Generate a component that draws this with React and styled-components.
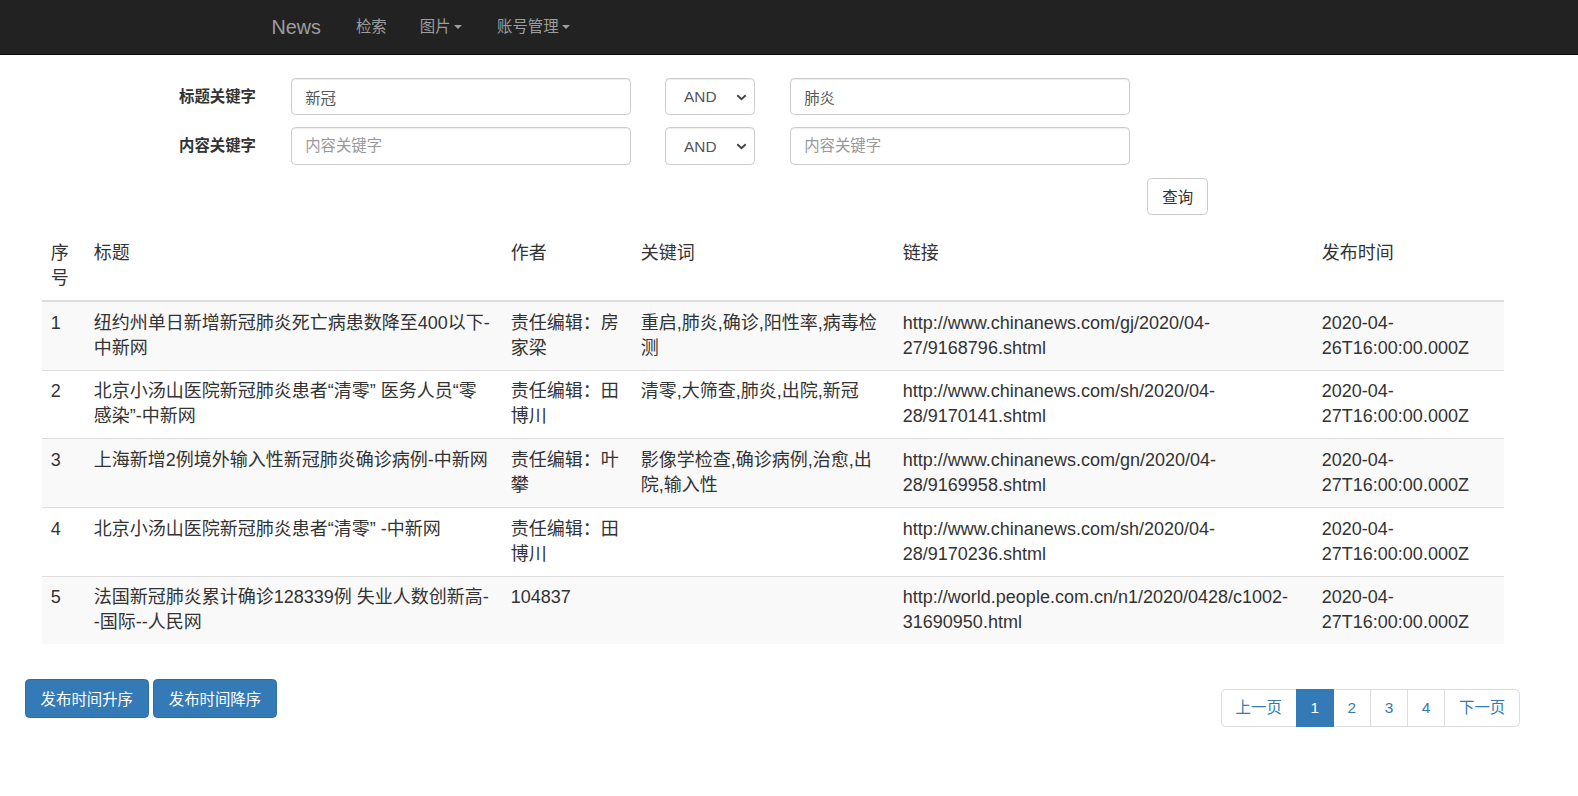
import React from "react";
import styled, { createGlobalStyle } from "styled-components";

const GlobalStyle = createGlobalStyle`
  html, body { margin: 0; padding: 0; background: #fff; }
  body {
    font-family: "Liberation Sans", "Noto Sans CJK SC", sans-serif;
    font-size: 15.4px;
    line-height: 1.42857;
    color: #333;
  }
  *, *::before, *::after { box-sizing: border-box; }
`;

const Navbar = styled.nav`
  background: #222;
  border-bottom: 1px solid #080808;
  height: 55px;
  display: flex;
  align-items: stretch;
  padding-left: 255px;
`;

const Brand = styled.a`
  padding: 0 18.5px 0 16.5px;
  font-size: 19.8px;
  line-height: 54px;
  color: #9d9d9d;
  text-decoration: none;
`;

const NavLink = styled.a`
  padding: 0 16.5px;
  font-size: 15.4px;
  line-height: 54px;
  color: #9d9d9d;
  text-decoration: none;
  display: flex;
  align-items: center;
`;

const Caret = styled.span`
  display: inline-block;
  width: 0;
  height: 0;
  margin-left: 3px;
  margin-right: 2.5px;
  border-top: 4.6px solid #9d9d9d;
  border-left: 4.6px solid transparent;
  border-right: 4.6px solid transparent;
`;

const SearchForm = styled.form`
  width: 1208px;
  padding: 23px 0 0 179px;
  display: flex;
  flex-direction: column;
  gap: 12px;
`;

const FormRow = styled.div`
  display: flex;
  align-items: center;
`;

const FieldLabel = styled.label`
  width: 112px;
  font-weight: bold;
  font-size: 15.4px;
  color: #333;
`;

const KeywordInput = styled.input`
  width: 340px;
  height: 37.4px;
  margin-left: ${(p) => p.$offset || 0}px;
  padding: 6.6px 13.2px;
  font-family: inherit;
  font-size: 15.4px;
  color: #555;
  background: #fff;
  border: 1px solid #ccc;
  border-radius: 4.4px;
  box-shadow: inset 0 1px 1px rgba(0, 0, 0, 0.075);
  outline: none;
  &::placeholder { color: #999; }
`;

const SelectWrap = styled.div`
  position: relative;
  width: 90px;
  height: 37.4px;
  margin-left: 34px;
`;

const Select = styled.select`
  appearance: none;
  width: 100%;
  height: 100%;
  padding: 0 0 0 18px;
  font-family: inherit;
  font-size: 15.4px;
  color: #555;
  background: #fff;
  border: 1px solid #ccc;
  border-radius: 4.4px;
  box-shadow: inset 0 1px 1px rgba(0, 0, 0, 0.075);
  outline: none;
`;

const Chevron = styled.svg`
  position: absolute;
  right: 8px;
  top: 16px;
  pointer-events: none;
`;

const ButtonRow = styled.div`
  display: flex;
  justify-content: flex-end;
  padding-top: 1px;
`;

const DefaultButton = styled.button`
  height: 37.4px;
  padding: 6.6px 13.9px;
  font-family: inherit;
  font-size: 15.4px;
  color: #333;
  background: #fff;
  border: 1px solid #ccc;
  border-radius: 4.4px;
`;

const DataTable = styled.table`
  margin: 17px 0 0 42px;
  width: 1462px;
  table-layout: fixed;
  border-collapse: collapse;
  font-size: 18px;
  line-height: 25.05px;
  color: #333;
`;

const Th = styled.th`
  text-align: left;
  font-weight: normal;
  vertical-align: top;
  padding: 8.8px;
  border-bottom: 2px solid #ddd;
`;

const Tr = styled.tr`
  &:nth-of-type(odd) { background: #f9f9f9; }
`;

const Td = styled.td`
  vertical-align: top;
  padding: 8.8px;
  border-top: 1px solid #ddd;
`;

const Footer = styled.div`
  width: 1520px;
  margin-top: 35px;
  padding-left: 25px;
  display: flex;
  justify-content: space-between;
  align-items: flex-start;
`;

const SortGroup = styled.div`
  display: flex;
  gap: 4.6px;
`;

const PrimaryButton = styled.button`
  height: 38.4px;
  padding: 7px 14.6px;
  font-family: inherit;
  font-size: 15.4px;
  color: #fff;
  background: #337ab7;
  border: 1px solid #2e6da4;
  border-radius: 4.4px;
`;

const Pagination = styled.ul`
  display: flex;
  list-style: none;
  margin: 10px 0 0 0;
  padding: 0;
`;

const PageItem = styled.li`
  height: 37.6px;
  padding: 7px 13.8px;
  font-size: 15.4px;
  line-height: 22px;
  margin-left: -1px;
  color: ${(p) => (p.$active ? "#fff" : "#337ab7")};
  background: ${(p) => (p.$active ? "#337ab7" : "#fff")};
  border: 1px solid ${(p) => (p.$active ? "#337ab7" : "#ddd")};
  position: ${(p) => (p.$active ? "relative" : "static")};
  border-radius: ${(p) =>
    p.$first ? "4.4px 0 0 4.4px" : p.$last ? "0 4.4px 4.4px 0" : "0"};
  &:first-child { margin-left: 0; }
`;

const columns = [
  { key: "no", title: "序号", width: 43 },
  { key: "title", title: "标题", width: 417 },
  { key: "author", title: "作者", width: 130 },
  { key: "kw", title: "关键词", width: 262 },
  { key: "link", title: "链接", width: 419 },
  { key: "time", title: "发布时间", width: 191 },
];

const rows = [
  {
    no: "1",
    title: "纽约州单日新增新冠肺炎死亡病患数降至400以下-中新网",
    author: "责任编辑：房家梁",
    kw: "重启,肺炎,确诊,阳性率,病毒检测",
    link: "http://www.chinanews.com/gj/2020/04-27/9168796.shtml",
    time: "2020-04-26T16:00:00.000Z",
  },
  {
    no: "2",
    title: "北京小汤山医院新冠肺炎患者“清零” 医务人员“零感染”-中新网",
    author: "责任编辑：田博川",
    kw: "清零,大筛查,肺炎,出院,新冠",
    link: "http://www.chinanews.com/sh/2020/04-28/9170141.shtml",
    time: "2020-04-27T16:00:00.000Z",
  },
  {
    no: "3",
    title: "上海新增2例境外输入性新冠肺炎确诊病例-中新网",
    author: "责任编辑：叶攀",
    kw: "影像学检查,确诊病例,治愈,出院,输入性",
    link: "http://www.chinanews.com/gn/2020/04-28/9169958.shtml",
    time: "2020-04-27T16:00:00.000Z",
  },
  {
    no: "4",
    title: "北京小汤山医院新冠肺炎患者“清零” -中新网",
    author: "责任编辑：田博川",
    kw: "",
    link: "http://www.chinanews.com/sh/2020/04-28/9170236.shtml",
    time: "2020-04-27T16:00:00.000Z",
  },
  {
    no: "5",
    title: (
      <>
        法国新冠肺炎累计确诊128339例 失业人数创新高-<wbr />-国际--人民网
      </>
    ),
    author: "104837",
    kw: "",
    link: "http://world.people.com.cn/n1/2020/0428/c1002-31690950.html",
    time: "2020-04-27T16:00:00.000Z",
  },
];

const pages = ["上一页", "1", "2", "3", "4", "下一页"];

function ChevronIcon() {
  return (
    <Chevron width="11" height="7" viewBox="0 0 11 7">
      <polyline points="1.3,1.3 5.5,5.3 9.7,1.3" fill="none" stroke="#444" strokeWidth="1.9" />
    </Chevron>
  );
}

export default function App() {
  return (
    <>
      <GlobalStyle />
      <Navbar>
        <Brand>News</Brand>
        <NavLink>检索</NavLink>
        <NavLink>
          图片<Caret />
        </NavLink>
        <NavLink>
          账号管理<Caret />
        </NavLink>
      </Navbar>

      <SearchForm onSubmit={(e) => e.preventDefault()}>
        <FormRow>
          <FieldLabel>标题关键字</FieldLabel>
          <KeywordInput defaultValue="新冠" />
          <SelectWrap>
            <Select defaultValue="AND">
              <option>AND</option>
              <option>OR</option>
            </Select>
            <ChevronIcon />
          </SelectWrap>
          <KeywordInput $offset={35} defaultValue="肺炎" />
        </FormRow>
        <FormRow>
          <FieldLabel>内容关键字</FieldLabel>
          <KeywordInput placeholder="内容关键字" />
          <SelectWrap>
            <Select defaultValue="AND">
              <option>AND</option>
              <option>OR</option>
            </Select>
            <ChevronIcon />
          </SelectWrap>
          <KeywordInput $offset={35} placeholder="内容关键字" />
        </FormRow>
        <ButtonRow>
          <DefaultButton type="submit">查询</DefaultButton>
        </ButtonRow>
      </SearchForm>

      <DataTable>
        <colgroup>
          {columns.map((c) => (
            <col key={c.key} style={{ width: c.width }} />
          ))}
        </colgroup>
        <thead>
          <tr>
            {columns.map((c) => (
              <Th key={c.key}>{c.title}</Th>
            ))}
          </tr>
        </thead>
        <tbody>
          {rows.map((r) => (
            <Tr key={r.no}>
              {columns.map((c) => (
                <Td key={c.key}>{r[c.key]}</Td>
              ))}
            </Tr>
          ))}
        </tbody>
      </DataTable>

      <Footer>
        <SortGroup>
          <PrimaryButton>发布时间升序</PrimaryButton>
          <PrimaryButton>发布时间降序</PrimaryButton>
        </SortGroup>
        <Pagination>
          {pages.map((p, i) => (
            <PageItem
              key={p}
              $active={p === "1"}
              $first={i === 0}
              $last={i === pages.length - 1}
            >
              {p}
            </PageItem>
          ))}
        </Pagination>
      </Footer>
    </>
  );
}
